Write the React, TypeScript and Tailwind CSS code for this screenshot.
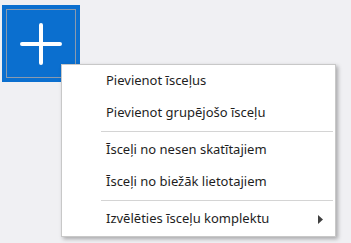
const items = [
  ['Pievienot īsceļus', 'Pievienot grupējošo īsceļu'],
  ['Īsceļi no nesen skatītajiem', 'Īsceļi no biežāk lietotajiem'],
];

const MenuItem = ({ label, submenu = false }: { label: string; submenu?: boolean }) => (
  <div className="flex h-[32px] items-center justify-between pl-[44px] pr-[11px] text-[13px] text-[#1e1e1e]">
    <span>{label}</span>
    {submenu && (
      <svg width="6" height="9" viewBox="0 0 6 9" className="fill-[#404040]">
        <path d="M0 0 L5 4.5 L0 9 Z" />
      </svg>
    )}
  </div>
);

const Separator = () => <div className="my-[2px] ml-[39px] mr-[2px] h-px bg-[#d4d4d4]" />;

export default function App() {
  return (
    <div className="relative h-[243px] w-[351px] bg-[#f0f0f3] font-['Noto_Sans',sans-serif]">
      <div className="pl-[2px] pt-[5px]">
        <button className="flex h-[77px] w-[78px] items-center justify-center border-4 border-[#0b6fcf] bg-[#0b6fcf] outline outline-1 -outline-offset-[5px] outline-[#8a9aae]">
          {/* plus glyph */}
          <svg width="42" height="42" viewBox="0 0 42 42" className="mt-px stroke-white" strokeWidth="4" strokeLinecap="round">
            <path d="M2 21 H40 M21 2 V40" />
          </svg>
        </button>
      </div>

      <div className="absolute left-[61px] top-[64px] w-[275px] border border-[#c8c8c8] bg-white pb-px shadow-[2px_2px_4px_rgba(0,0,0,0.3)]">
        <MenuItem label={items[0][0]} />
        <MenuItem label={items[0][1]} />
        <Separator />
        <MenuItem label={items[1][0]} />
        <MenuItem label={items[1][1]} />
        <Separator />
        <MenuItem label="Izvēlēties īsceļu komplektu" submenu />
      </div>
    </div>
  );
}
